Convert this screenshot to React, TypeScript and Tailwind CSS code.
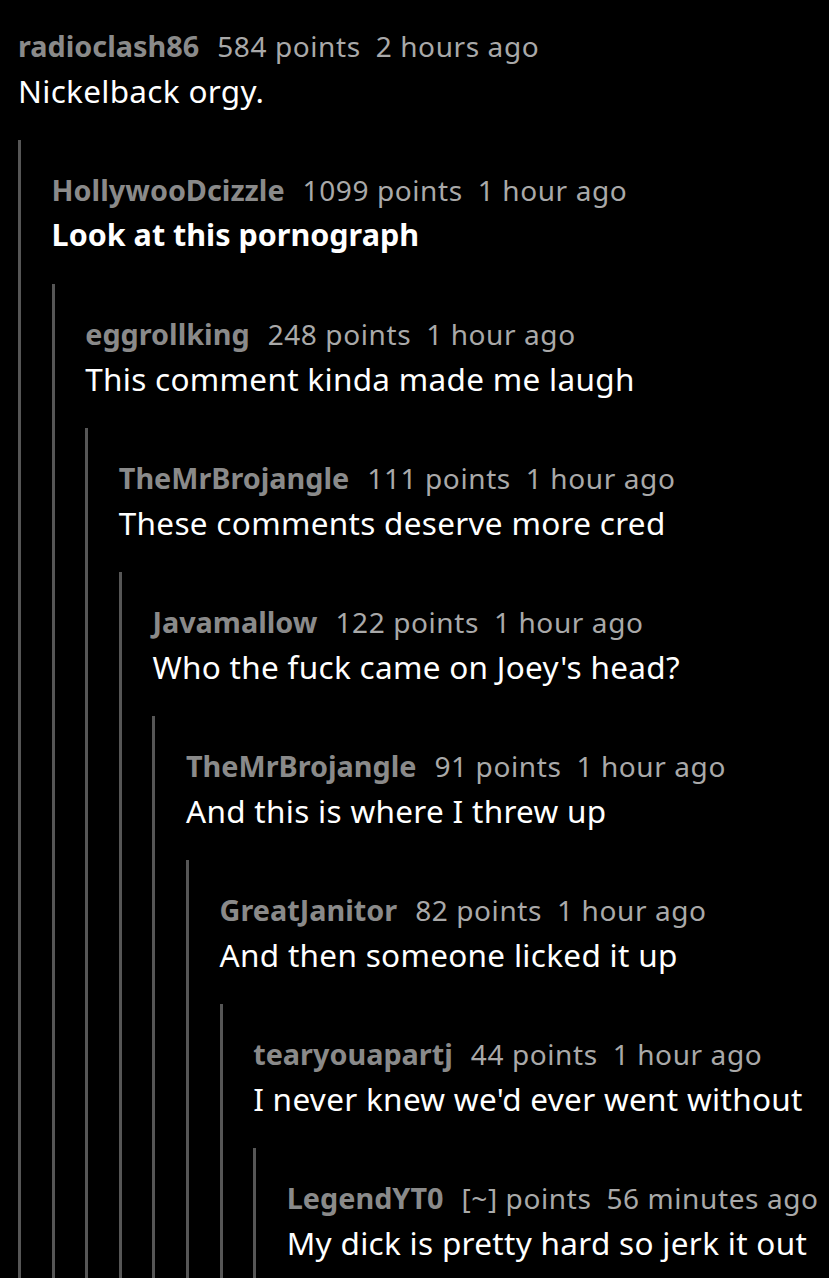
type Comment = {
  user: string;
  points: string;
  time: string;
  body: string;
  bold?: boolean;
};

const thread: Comment[] = [
  { user: "radioclash86", points: "584 points", time: "2 hours ago", body: "Nickelback orgy." },
  { user: "HollywooDcizzle", points: "1099 points", time: "1 hour ago", body: "Look at this pornograph", bold: true },
  { user: "eggrollking", points: "248 points", time: "1 hour ago", body: "This comment kinda made me laugh" },
  { user: "TheMrBrojangle", points: "111 points", time: "1 hour ago", body: "These comments deserve more cred" },
  { user: "Javamallow", points: "122 points", time: "1 hour ago", body: "Who the fuck came on Joey's head?" },
  { user: "TheMrBrojangle", points: "91 points", time: "1 hour ago", body: "And this is where I threw up" },
  { user: "GreatJanitor", points: "82 points", time: "1 hour ago", body: "And then someone licked it up" },
  { user: "tearyouapartj", points: "44 points", time: "1 hour ago", body: "I never knew we'd ever went without" },
  { user: "LegendYT0", points: "[~] points", time: "56 minutes ago", body: "My dick is pretty hard so jerk it out" },
];

function CommentNode({ index }: { index: number }) {
  const c = thread[index];
  const last = index === thread.length - 1;
  return (
    <div>
      <div className="flex h-[45px] items-baseline gap-[18px] leading-[45px] text-[28px] whitespace-nowrap">
        <span className="font-bold text-[28.8px] text-[#8a8a8a]">{c.user}</span>
        <span className="flex gap-[15px] text-[#a9a9a9] tracking-[0.6px]">
          <span>{c.points}</span>
          <span>{c.time}</span>
        </span>
      </div>
      <div
        className={`h-[45px] leading-[45px] text-white whitespace-nowrap ${
          c.bold ? "font-bold text-[30.5px]" : "text-[31.5px] tracking-[0.3px]"
        } ${last ? "pb-[14px] box-content" : ""}`}
      >
        {c.body}
      </div>
      {!last && (
        <div className="mt-[27px] border-l-[3px] border-[#565656] pl-[30.6px] pt-[27px]">
          <CommentNode index={index + 1} />
        </div>
      )}
    </div>
  );
}

export default function App() {
  return (
    <div
      className="w-[829px] h-[1278px] overflow-hidden bg-black pl-[18px] pt-[22.5px]"
      style={{ fontFamily: '"Noto Sans", "Open Sans", sans-serif' }}
    >
      <CommentNode index={0} />
    </div>
  );
}
